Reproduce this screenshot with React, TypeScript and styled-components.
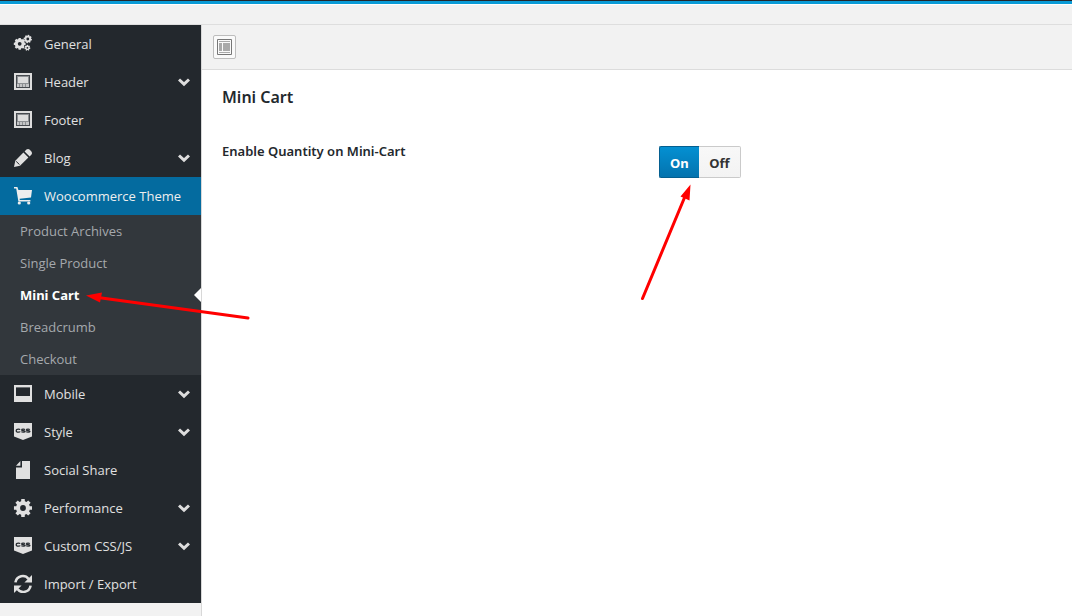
import React, { useState } from "react";
import styled, { createGlobalStyle, css } from "styled-components";

const GlobalStyle = createGlobalStyle`
  *, *::before, *::after { box-sizing: border-box; }
  body {
    margin: 0;
    background: #f2f2f2;
    color: #23282d;
    font-family: "Noto Sans", "Open Sans", sans-serif;
    font-size: 13px;
  }
  #root { display: flex; flex-direction: column; min-height: 100vh; }
`;

const TopBar = styled.header`
  height: 25px;
  border-top: 1px solid #23282d;
  border-bottom: 1px solid #dedede;
  background: #f2f2f2;

  &::before {
    content: "";
    display: block;
    height: 4px;
    background: #0a9bd6;
    border-bottom: 1px solid #ffffff;
  }
`;

const Layout = styled.div`
  display: flex;
  flex: 1;
`;

const Sidebar = styled.nav`
  flex: 0 0 202px;
  border-right: 1px solid #d8d8d8;
  font-family: "Open Sans", "Noto Sans", sans-serif;
`;

const Menu = styled.ul`
  margin: 0;
  padding: 0;
  list-style: none;
  background: #23282d;
`;

const MenuLink = styled.a<{ $active?: boolean }>`
  display: flex;
  align-items: center;
  gap: 12px;
  height: 38px;
  padding: 0 11px 0 13px;
  color: ${(p) => (p.$active ? "#eeeeee" : "#e0e0e0")};
  background: ${(p) => (p.$active ? "#046b9f" : "transparent")};
  line-height: 18px;
  text-decoration: none;
`;

const MenuText = styled.span`
  flex: 1;
  white-space: nowrap;
`;

const Icon = styled.svg`
  display: block;
  flex: none;
  width: 19px;
  height: 19px;
  margin-bottom: 2px;
  fill: currentColor;
`;

const Chevron = styled.svg`
  display: block;
  flex: none;
  width: 12px;
  height: 10px;
  fill: none;
  stroke: #dddddd;
  stroke-width: 3;
`;

const SubMenu = styled.ul`
  margin: 0;
  padding: 0;
  list-style: none;
  background: #32373c;
`;

const SubLink = styled.a<{ $current?: boolean }>`
  display: flex;
  align-items: center;
  justify-content: space-between;
  height: 32px;
  padding-left: 20px;
  color: #a5a9ad;
  line-height: 18px;
  text-decoration: none;

  ${(p) =>
    p.$current &&
    css`
      color: #ffffff;
      font-family: "Noto Sans", "Open Sans", sans-serif;
      font-weight: 700;

      &::after {
        content: "";
        border: 7px solid transparent;
        border-left-width: 0;
        border-right-color: #ffffff;
      }
    `}
`;

const Main = styled.main`
  flex: 1;
  min-width: 0;
  background: #ffffff;
`;

const Toolbar = styled.div`
  display: flex;
  align-items: center;
  height: 45px;
  padding-left: 11px;
  background: #f2f2f2;
  border-bottom: 1px solid #dcdcdc;
`;

const ExpandButton = styled.button`
  display: flex;
  align-items: center;
  justify-content: center;
  width: 23px;
  height: 24px;
  padding: 0;
  color: #6e6e6e;
  background: #fafafa;
  border: 1px solid #bdbdbd;
  border-radius: 2px;
`;

const Section = styled.section`
  padding: 15px 20px;
`;

const Title = styled.h2`
  margin: 0 0 37px;
  font-size: 16px;
  font-weight: 600;
  line-height: 24px;
`;

const Field = styled.fieldset`
  display: grid;
  grid-template-columns: 10fr 9fr;
  margin: 0;
  padding: 0;
  border: 0;
`;

const FieldLabel = styled.div`
  font-weight: 600;
  line-height: 10px;
`;

const Switch = styled.div`
  display: flex;
`;

const Option = styled.label<{ $on: boolean; $side: "left" | "right" }>`
  position: relative;
  display: flex;
  align-items: center;
  justify-content: center;
  width: ${(p) => (p.$side === "left" ? "40px" : "42px")};
  height: 32px;
  padding-top: 2px;
  font-weight: 700;
  line-height: 18px;
  cursor: pointer;
  border: 1px solid ${(p) => (p.$on ? "#045f90" : "#cacaca")};
  border-radius: ${(p) => (p.$side === "left" ? "2px 0 0 2px" : "0 2px 2px 0")};
  color: ${(p) => (p.$on ? "#ffffff" : "#333333")};
  background: ${(p) =>
    p.$on
      ? "linear-gradient(#0490d2, #0473ae)"
      : "linear-gradient(#f8f8f8, #f3f3f3)"};
  ${(p) => (p.$side === "left" ? "border-right: 0;" : "border-left: 0;")}
`;

const OptionInput = styled.input`
  position: absolute;
  inset: 0;
  width: 100%;
  height: 100%;
  margin: 0;
  opacity: 0;
  cursor: pointer;
`;

const Annotations = styled.svg`
  position: absolute;
  top: 0;
  left: 0;
  pointer-events: none;
`;

function gear(cx: number, cy: number, outer: number, inner: number, hole: number, teeth: number, turn = 0) {
  const pts: string[] = [];
  const step = (Math.PI * 2) / teeth;
  for (let i = 0; i < teeth; i++) {
    const a = i * step + turn;
    const corners: [number, number][] = [
      [inner, -0.34],
      [outer, -0.24],
      [outer, 0.24],
      [inner, 0.34],
    ];
    corners.forEach(([r, o]) => {
      const t = a + o * step;
      pts.push(`${(cx + r * Math.cos(t)).toFixed(2)} ${(cy + r * Math.sin(t)).toFixed(2)}`);
    });
  }
  return `M${pts.join("L")}ZM${cx - hole} ${cy}a${hole} ${hole} 0 1 0 ${hole * 2} 0a${hole} ${hole} 0 1 0 ${-hole * 2} 0Z`;
}

const GearsIcon = () => (
  <Icon viewBox="0 0 19 19" aria-hidden="true" fillRule="evenodd">
    <path d={gear(6.7, 9.8, 6, 4.9, 1.9, 8)} />
    <path d={gear(14.8, 5, 4.2, 3.3, 1.4, 8, 0.2)} />
    <path d={gear(14.4, 13.8, 3, 2.3, 0.9, 7, 0.2)} />
  </Icon>
);

const LayoutIcon = () => (
  <Icon viewBox="0 0 19 19" aria-hidden="true">
    <path fill="#dddddd" d="M1 1h18v17H1z" />
    <path fill="#45494e" d="M3 3h14v13H3z" />
    <path fill="#8d9093" d="M4 4h12v11H4z" />
    <path fill="#dddddd" d="M5 5h10v6H5z" />
    <path fill="#c4c5c6" d="M4 12h2v3H4zM7 12h2v3H7zM10 12h2v3h-2zM13 12h3v3h-3z" />
  </Icon>
);

const PencilIcon = () => (
  <Icon viewBox="0 0 19 19" aria-hidden="true">
    <path d="M1 19 2.3 12.8 10.4 4.6 15.4 9.6 7 17.8ZM11.6 3.4 13.4 1.6Q15.2.4 16.8 1.8L18.4 3.6Q19.5 5.2 18.5 6.5L16.6 8.4Z" />
    <path stroke="#23282d" strokeWidth="1" fill="none" d="M3.2 13.4 6.5 16.6" />
  </Icon>
);

const CartIcon = () => (
  <Icon viewBox="0 0 19 19" aria-hidden="true">
    <path d="M1 1h3.4L5.4 4H19L18 11.6 6.6 12.8 6.8 14H17.4V15.4H5.4L3.2 2.4H1Z" />
    <circle cx="6.3" cy="17" r="1.6" />
    <circle cx="15.7" cy="17" r="1.6" />
  </Icon>
);

const MobileIcon = () => (
  <Icon viewBox="0 0 19 19" aria-hidden="true" fillRule="evenodd">
    <path d="M1 1h18v17H1ZM3 3v9h14V3Z" />
    <path fill="#6c7073" d="M3 3h14v1H3z" />
  </Icon>
);

const CssIcon = () => (
  <Icon viewBox="0 0 19 19" aria-hidden="true">
    <path d="M1 1H19V14.6L10 18 1 14.6Z" />
    <path
      fill="none"
      stroke="#23282d"
      strokeWidth="1.2"
      d="M7.2 7.6Q6.8 7.2 5.4 7.2 3.2 7.2 3.2 8.7T5.4 10.2Q6.9 10.2 7.2 9.6M12 7.6Q11.6 7.2 10.3 7.2 8.6 7.2 8.6 7.9T10.4 8.7Q12.2 8.8 12.2 9.5T10.3 10.2Q8.8 10.2 8.4 9.7M16.8 7.6Q16.4 7.2 15.1 7.2 13.4 7.2 13.4 7.9T15.2 8.7Q17 8.8 17 9.5T15.100 10.2Q13.6 10.2 13.2 9.7"
    />
  </Icon>
);

const FileIcon = () => (
  <Icon viewBox="0 0 19 19" aria-hidden="true">
    <path d="M9 1H17V19H3V7.6H9ZM7.4 1V5.8H3Z" />
  </Icon>
);

const GearIcon = () => (
  <Icon viewBox="0 0 19 19" aria-hidden="true" fillRule="evenodd">
    <path d={gear(10, 10, 9.2, 7, 2.9, 8)} />
  </Icon>
);

const RefreshIcon = () => (
  <Icon viewBox="0 0 19 19" aria-hidden="true">
    <path fill="none" stroke="currentColor" strokeWidth="2.6" d="M2.4 8.4C3.6 1.4 12 .2 15.6 5M17.6 11.6C16.4 18.6 8 19.8 4.4 15" />
    <path d="M19 1V8.6H11.4ZM1 19V11.4H8.6Z" />
  </Icon>
);

const PanelIcon = () => (
  <svg width="15" height="16" viewBox="0 0 15 16" aria-hidden="true">
    <path fill="none" stroke="#777777" d="M.5.5h14v15H.5z" />
    <path fill="#aaaaaa" d="M2 2h11v1H2zM2 4h3v8H2zM6 4h7v8H6zM2 13h11v1H2z" />
  </svg>
);

type Item = { name: string; icon: () => React.JSX.Element; open?: boolean; more?: boolean };

const items: Item[] = [
  { name: "General", icon: GearsIcon },
  { name: "Header", icon: LayoutIcon, more: true },
  { name: "Footer", icon: LayoutIcon },
  { name: "Blog", icon: PencilIcon, more: true },
  { name: "Woocommerce Theme", icon: CartIcon, open: true },
  { name: "Mobile", icon: MobileIcon, more: true },
  { name: "Style", icon: CssIcon, more: true },
  { name: "Social Share", icon: FileIcon },
  { name: "Performance", icon: GearIcon, more: true },
  { name: "Custom CSS/JS", icon: CssIcon, more: true },
  { name: "Import / Export", icon: RefreshIcon },
];

const subItems = ["Product Archives", "Single Product", "Mini Cart", "Breadcrumb", "Checkout"];

export default function App() {
  const [enabled, setEnabled] = useState(true);

  return (
    <>
      <GlobalStyle />
      <TopBar />
      <Layout>
        <Sidebar aria-label="Theme options">
          <Menu>
            {items.map(({ name, icon: ItemIcon, open, more }) => (
              <li key={name}>
                <MenuLink href="#" $active={open}>
                  <ItemIcon />
                  <MenuText>{name}</MenuText>
                  {more && (
                    <Chevron viewBox="0 0 12 10" aria-hidden="true">
                      <path d="M1 2.5 6 7.2 11 2.5" />
                    </Chevron>
                  )}
                </MenuLink>
                {open && (
                  <SubMenu>
                    {subItems.map((sub) => (
                      <li key={sub}>
                        <SubLink href="#" $current={sub === "Mini Cart"}>
                          {sub}
                        </SubLink>
                      </li>
                    ))}
                  </SubMenu>
                )}
              </li>
            ))}
          </Menu>
        </Sidebar>
        <Main>
          <Toolbar>
            <ExpandButton type="button" aria-label="Expand all">
              <PanelIcon />
            </ExpandButton>
          </Toolbar>
          <Section>
            <Title>Mini Cart</Title>
            <Field aria-labelledby="quantity-label">
              <FieldLabel id="quantity-label">Enable Quantity on Mini-Cart</FieldLabel>
              <Switch>
                <Option $on={enabled} $side="left">
                  <OptionInput type="radio" name="quantity" checked={enabled} onChange={() => setEnabled(true)} />
                  On
                </Option>
                <Option $on={!enabled} $side="right">
                  <OptionInput type="radio" name="quantity" checked={!enabled} onChange={() => setEnabled(false)} />
                  Off
                </Option>
              </Switch>
            </Field>
          </Section>
        </Main>
      </Layout>
      <Annotations width="700" height="330" viewBox="0 0 700 330" aria-hidden="true">
        <g stroke="#ff0000" strokeWidth="3" strokeLinecap="round">
          <path d="M98 297.5 248 318M686 194 642.5 298.5" />
        </g>
        <path fill="#ff0000" d="M86 295.5 102 292.5 100 302.5ZM690.5 184.5 689.5 200.5 680.5 196.5Z" />
      </Annotations>
    </>
  );
}
